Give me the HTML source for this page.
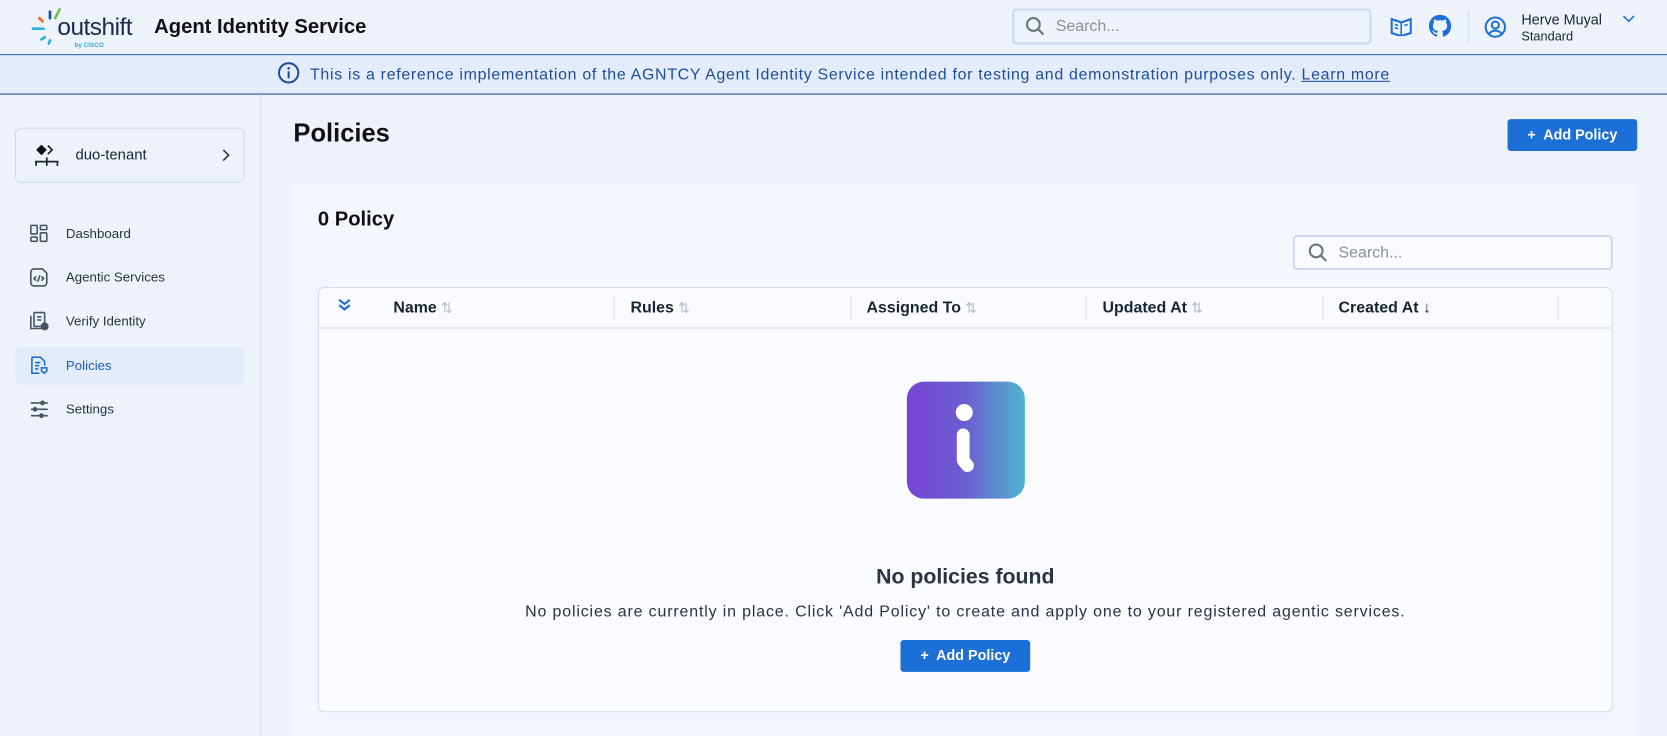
<!DOCTYPE html>
<html><head><meta charset="utf-8"><style>
*{box-sizing:border-box;margin:0;padding:0}
html,body{width:1667px;height:736px;overflow:hidden;background:#eef2fb}
body{font-family:"Liberation Sans",sans-serif;color:#1b2433;position:relative}
#w{position:absolute;left:0;top:0;width:1568px;height:692px;overflow:hidden;transform:scale(1.06314);transform-origin:0 0}
.abs{position:absolute}
.hdr{left:0;top:0;width:1568px;height:52px;background:#eef2fb;border-bottom:1.5px solid #1d4f9c}
.ban{left:0;top:52px;width:1568px;height:37px;background:#e4ecfb;border-bottom:1.5px solid #1d4f9c;color:#1d4f9c;font-size:15px;text-align:center;line-height:37px;letter-spacing:0.65px}
.side{left:0;top:89px;width:246px;height:603px;border-right:1px solid #d6dded}
.nav{left:14px;width:216px;height:36px;font-size:12.5px;line-height:36px;padding-left:48px;color:#2a3343}
.nav svg{position:absolute;left:14px;top:9px}
.btn{background:#1b6fd6;color:#fff;font-size:13.5px;font-weight:bold;border-radius:3px;text-align:center}
.th{top:280px;font-size:15px;font-weight:bold;line-height:20px}
.sep{top:279px;width:1px;height:22px;background:#d6dded}
.srt{color:#b5bcc8;font-weight:normal;margin-left:4px;font-size:13px}
</style></head><body><div id="w">
<div class="abs hdr"></div>
<svg class="abs" style="left:28px;top:4px" width="40" height="42" viewBox="0 0 40 42"><path d="M3 23h10" stroke="#2bb0e6" stroke-width="2.5" stroke-linecap="round"/><path d="M9 13l3 3" stroke="#f06a2c" stroke-width="2.5" stroke-linecap="round"/><path d="M19 7v6" stroke="#1d4f9c" stroke-width="2.5" stroke-linecap="round"/><path d="M28 5l-4 8" stroke="#6cc04a" stroke-width="2.5" stroke-linecap="round"/><path d="M14 31l-3 2M19 34l-1 3" stroke="#2bb0e6" stroke-width="2.5" stroke-linecap="round"/></svg>
<div class="abs" style="left:54px;top:12px;font-size:23px;color:#1b2a4a;letter-spacing:-0.5px">outshift</div>
<div class="abs" style="left:70px;top:40px;font-size:6px;color:#2bb0e6;font-weight:bold">by CISCO</div>
<div class="abs" style="left:145px;top:15px;font-size:19px;font-weight:bold;color:#111">Agent Identity Service</div>
<div class="abs" style="left:952px;top:8px;width:338px;height:34px;border:2px solid #cdd9ef;border-radius:4px;background:#eef2fb"></div>
<svg class="abs" style="left:964px;top:15px" width="20" height="20" viewBox="0 0 20 20"><circle cx="8" cy="8" r="6" fill="none" stroke="#6b7380" stroke-width="2"/><path d="M12.5 12.5l5 5" stroke="#6b7380" stroke-width="2"/></svg>
<div class="abs" style="left:993px;top:16px;font-size:15px;color:#8a919c">Search...</div>
<svg class="abs" style="left:1308px;top:16px" width="20" height="18" viewBox="0 0 20 18"><path d="M1 2l9 3 9-3v13l-9 3-9-3z" fill="none" stroke="#1b6fd6" stroke-width="2"/><path d="M10 5v13M4 7l3 1M4 10l3 1M13 8l3-1" stroke="#1b6fd6" stroke-width="1.5"/></svg>
<svg class="abs" style="left:1344px;top:14px" width="21" height="21" viewBox="0 0 16 16"><path fill="#1b6fd6" d="M8 0C3.58 0 0 3.58 0 8c0 3.54 2.29 6.53 5.47 7.59.4.07.55-.17.55-.38v-1.33c-2.23.48-2.7-1.07-2.7-1.07-.36-.92-.89-1.17-.89-1.17-.73-.5.06-.49.06-.49.8.06 1.23.83 1.23.83.71 1.22 1.87.87 2.33.66.07-.52.28-.87.5-1.07-1.78-.2-3.64-.89-3.64-3.95 0-.87.31-1.59.82-2.15-.08-.2-.36-1.02.08-2.12 0 0 .67-.21 2.2.82A7.6 7.6 0 018 3.87c.68 0 1.36.09 2 .27 1.53-1.04 2.2-.82 2.2-.82.44 1.1.16 1.92.08 2.12.51.56.82 1.27.82 2.15 0 3.07-1.87 3.75-3.65 3.95.29.25.54.73.54 1.48v2.2c0 .21.15.46.55.38A8 8 0 0016 8c0-4.42-3.58-8-8-8z"/></svg>
<div class="abs" style="left:1381px;top:10px;width:1px;height:30px;background:#cdd9ef"></div>
<svg class="abs" style="left:1396px;top:15px" width="21" height="21" viewBox="0 0 22 22"><circle cx="11" cy="11" r="9.5" fill="none" stroke="#1b6fd6" stroke-width="2"/><circle cx="11" cy="9" r="3.5" fill="none" stroke="#1b6fd6" stroke-width="2"/><path d="M5 17.5c3-4 9-4 12 0" fill="none" stroke="#1b6fd6" stroke-width="2"/></svg>
<div class="abs" style="left:1431px;top:11px;font-size:13.5px;color:#1b2433">Herve Muyal</div>
<div class="abs" style="left:1431px;top:27px;font-size:12px;color:#1b2433">Standard</div>
<svg class="abs" style="left:1526px;top:14px" width="12" height="8" viewBox="0 0 12 8"><path d="M1 1l5 5 5-5" fill="none" stroke="#1b6fd6" stroke-width="1.5"/></svg>

<div class="abs ban"><svg style="vertical-align:-4px;margin-right:10px" width="21" height="21" viewBox="0 0 22 22"><circle cx="11" cy="11" r="9.5" fill="none" stroke="#1d4f9c" stroke-width="2"/><circle cx="11" cy="6.5" r="1.3" fill="#1d4f9c"/><path d="M11 9.5v7" stroke="#1d4f9c" stroke-width="2"/></svg>This is a reference implementation of the AGNTCY Agent Identity Service intended for testing and demonstration purposes only. <u>Learn more</u></div>

<div class="abs side"></div>
<div class="abs" style="left:14px;top:120px;width:216px;height:52px;border:1px solid #cdd9ef;border-radius:6px"></div>
<svg class="abs" style="left:32px;top:134px" width="24" height="24" viewBox="0 0 24 24"><path d="M7 2l5 5-5 5-5-5z" fill="#111"/><path d="M13 3l4 4-4 4" fill="none" stroke="#1b2433" stroke-width="1.6"/><path d="M1 18h22M12 14v8M2 18v4M22 18v4" stroke="#1b2433" stroke-width="1.6"/></svg>
<div class="abs" style="left:71px;top:137px;font-size:14px">duo-tenant</div>
<svg class="abs" style="left:209px;top:140px" width="8" height="12" viewBox="0 0 8 12"><path d="M1 1l5 5-5 5" fill="none" stroke="#333" stroke-width="1.5"/></svg>

<div class="abs nav" style="top:202px"><svg width="18" height="18" viewBox="0 0 18 18" fill="none" stroke="#4a5160" stroke-width="1.5"><rect x="1" y="1" width="6" height="8" rx="1"/><rect x="10" y="1" width="6" height="4" rx="1"/><rect x="1" y="12" width="6" height="4" rx="1"/><rect x="10" y="8" width="6" height="8" rx="1"/></svg>Dashboard</div>
<div class="abs nav" style="top:243px"><svg width="18" height="18" viewBox="0 0 18 18" fill="none" stroke="#4a5160" stroke-width="1.5"><path d="M4 1h8l4 4v9a3 3 0 01-3 3H4a3 3 0 01-3-3V4a3 3 0 013-3z"/><path d="M6 8l-2 2 2 2M11 8l2 2-2 2M9.5 7l-2 6"/></svg>Agentic Services</div>
<div class="abs nav" style="top:284px"><svg width="18" height="18" viewBox="0 0 18 18" fill="none" stroke="#4a5160" stroke-width="1.5"><rect x="4" y="1" width="10" height="13" rx="1"/><path d="M1 4v12h10M7 5h4M7 8h4"/><circle cx="14" cy="14" r="3" fill="#4a5160"/></svg>Verify Identity</div>
<div class="abs nav" style="top:326px;background:#e3ecfb;border-radius:6px;color:#1b5fb8"><svg width="18" height="18" viewBox="0 0 18 18" fill="none" stroke="#1b6fd6" stroke-width="1.5"><path d="M2 1h8l4 4v4M2 1v15h7M5 6h5M5 9h4M5 12h3"/><path d="M11 11h5v3l-2.5 2-2.5-2z"/></svg>Policies</div>
<div class="abs nav" style="top:367px"><svg width="18" height="18" viewBox="0 0 18 18" fill="none" stroke="#4a5160" stroke-width="1.5"><path d="M1 3h16M1 9h16M1 15h16"/><circle cx="12" cy="3" r="1.5" fill="#4a5160"/><circle cx="5" cy="9" r="1.5" fill="#4a5160"/><circle cx="11" cy="15" r="1.5" fill="#4a5160"/></svg>Settings</div>

<div class="abs" style="left:276px;top:112px;font-size:24px;font-weight:bold;color:#111">Policies</div>
<div class="abs btn" style="left:1418px;top:112px;width:122px;height:30px;line-height:30px">+&nbsp; Add Policy</div>

<div class="abs" style="left:276px;top:172px;width:1264px;height:520px;background:#f4f6fd;border-radius:6px 6px 0 0"></div>
<div class="abs" style="left:299px;top:196px;font-size:19px;font-weight:bold;color:#111">0 Policy</div>
<div class="abs" style="left:1216px;top:221px;width:301px;height:33px;border:2px solid #cdd9ef;border-radius:4px;background:#fafbfe"></div>
<svg class="abs" style="left:1230px;top:228px" width="20" height="20" viewBox="0 0 20 20"><circle cx="8" cy="8" r="6" fill="none" stroke="#6b7380" stroke-width="2"/><path d="M12.5 12.5l5 5" stroke="#6b7380" stroke-width="2"/></svg>
<div class="abs" style="left:1259px;top:229px;font-size:15px;color:#8a919c">Search...</div>

<div class="abs" style="left:299px;top:270px;width:1218px;height:400px;border:1px solid #d3dcee;border-radius:6px;background:#fafbfe"></div>
<div class="abs" style="left:300px;top:308px;width:1216px;height:1px;background:#d3dcee"></div>
<svg class="abs" style="left:317px;top:280px" width="14" height="14" viewBox="0 0 14 14"><path d="M2 2l5 4 5-4M2 7l5 4 5-4" fill="none" stroke="#1b6fd6" stroke-width="2"/></svg>
<div class="abs th" style="left:370px">Name<span class="srt">⇅</span></div>
<div class="abs sep" style="left:577px"></div>
<div class="abs th" style="left:593px">Rules<span class="srt">⇅</span></div>
<div class="abs sep" style="left:800px"></div>
<div class="abs th" style="left:815px">Assigned To<span class="srt">⇅</span></div>
<div class="abs sep" style="left:1021px"></div>
<div class="abs th" style="left:1037px">Updated At<span class="srt">⇅</span></div>
<div class="abs sep" style="left:1244px"></div>
<div class="abs th" style="left:1259px">Created At <span style="font-weight:normal">↓</span></div>
<div class="abs sep" style="left:1465px"></div>

<div class="abs" style="left:853px;top:359px;width:111px;height:110px;border-radius:16px;background:linear-gradient(90deg,#7a42d4,#6a5fd0 50%,#4fb4d0)"></div>
<svg class="abs" style="left:853px;top:359px" width="111" height="110" viewBox="0 0 111 110"><circle cx="54" cy="29" r="8" fill="#fff"/><path d="M53 50v24l4 5" fill="none" stroke="#fff" stroke-width="12" stroke-linecap="round" stroke-linejoin="round"/></svg>
<div class="abs" style="left:300px;top:532px;width:1216px;text-align:center;font-size:20px;font-weight:bold;color:#2a3343">No policies found</div>
<div class="abs" style="left:300px;top:567px;width:1216px;text-align:center;font-size:15px;color:#2a3343;letter-spacing:0.8px">No policies are currently in place. Click 'Add Policy' to create and apply one to your registered agentic services.</div>
<div class="abs btn" style="left:847px;top:602px;width:122px;height:30px;line-height:30px">+&nbsp; Add Policy</div>
</div></body></html>
